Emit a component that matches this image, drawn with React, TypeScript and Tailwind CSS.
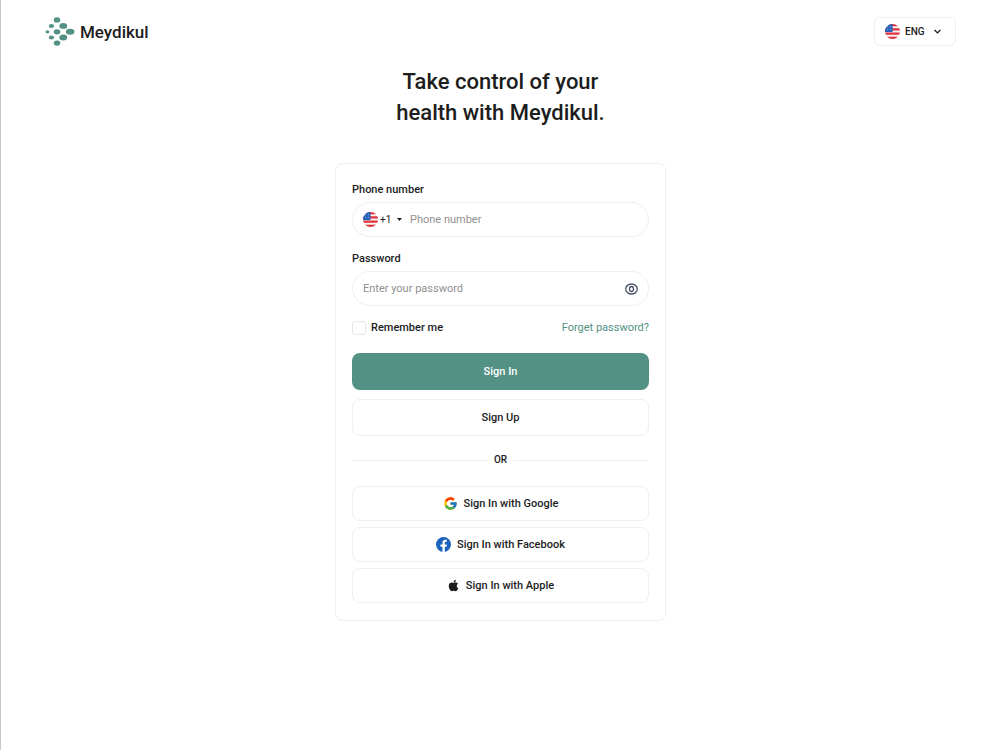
import { useState } from "react";
import type { ReactNode } from "react";
import { FcGoogle } from "react-icons/fc";
import { FaApple } from "react-icons/fa";

function Logo() {
  return (
    <svg viewBox="26 26 90 88" className="h-[29px] w-[30px]" fill="#539184" aria-hidden="true">
      <ellipse cx="62" cy="35" rx="10" ry="8" />
      <ellipse cx="45" cy="53" rx="8" ry="6" />
      <ellipse cx="81" cy="53" rx="12" ry="9" />
      <ellipse cx="33" cy="71" rx="6" ry="5" />
      <ellipse cx="62" cy="71" rx="10" ry="8" />
      <ellipse cx="102" cy="71" rx="13" ry="9" />
      <ellipse cx="45" cy="88" rx="8" ry="6" />
      <ellipse cx="81" cy="88" rx="12" ry="9" />
      <ellipse cx="62" cy="105" rx="10" ry="8" />
    </svg>
  );
}

function Flag({ id }: { id: string }) {
  return (
    <svg viewBox="0 0 28 28" className="size-[15px] shrink-0" aria-hidden="true">
      <clipPath id={id}>
        <circle cx="14" cy="14" r="14" />
      </clipPath>
      <g clipPath={`url(#${id})`}>
        <rect width="28" height="28" fill="#f6f1f3" />
        <path d="M0 2h28M0 10h28M0 18h28M0 26h28" stroke="#e0333f" strokeWidth="4" />
        <rect width="14" height="15" fill="#2560b8" />
        <path d="M4 5h2M9 5h2M4 10h2M9 10h2" stroke="#b9d0f0" strokeWidth="1.5" />
      </g>
    </svg>
  );
}

function Facebook() {
  return (
    <svg viewBox="0 0 28 28" className="size-[15px]" aria-hidden="true">
      <circle cx="14" cy="14" r="14" fill="#1b63bd" />
      <path
        d="M12 28v-10H8.400v-4.200H12v-3.100c0-3.600 2.100-5.600 5.400-5.600 1.500 0 3 .3 3 .3v3.500h-1.700c-1.700 0-2.300 1-2.300 2.100v2.800h3.900l-.6 4.200h-3.300v10z"
        fill="#fff"
      />
    </svg>
  );
}

function Eye() {
  return (
    <svg viewBox="0 0 26 24" className="h-[12px] w-[13px]" fill="none" stroke="#4a5068" strokeWidth="2.600" aria-hidden="true">
      <path d="M1.500 12C1.500 6 7 2 13 2s11.500 4 11.500 10S19 22 13 22 1.500 18 1.500 12z" />
      <ellipse cx="13" cy="12" rx="4" ry="5" />
    </svg>
  );
}

function SocialButton({ icon, children }: { icon: ReactNode; children: ReactNode }) {
  return (
    <button
      type="button"
      className="flex h-[35px] w-full items-center justify-center gap-1.5 rounded-lg border border-[#efefef] font-medium"
    >
      {icon}
      {children}
    </button>
  );
}

export default function App() {
  const [visible, setVisible] = useState(false);
  return (
    <div className="min-h-screen border-l border-[#c8c8c8] bg-white font-['Roboto',sans-serif] text-[11px] leading-4 text-[#1d1d1d]">
      <header className="flex items-center justify-between px-11 pt-[17px]">
        <a href="#" className="flex items-center gap-[5px] text-[17px] leading-6 font-medium">
          <Logo />
          Meydikul
        </a>
        <label className="relative flex h-[29px] w-[82px] items-center rounded-md border border-[#efefef] pl-[10px]">
          <Flag id="flag-language" />
          <select
            aria-label="Language"
            defaultValue="ENG"
            className="h-full flex-1 appearance-none bg-transparent pl-[5px] text-[10px] font-medium outline-none"
          >
            <option>ENG</option>
          </select>
          <svg viewBox="0 0 12 8" className="pointer-events-none absolute right-[14px] h-[5px] w-[7px]" fill="none" stroke="#1d1d1d" strokeWidth="2.200" aria-hidden="true">
            <path d="M1 1.500l5 5 5-5" />
          </svg>
        </label>
      </header>

      <main className="flex flex-col items-center pt-5">
        <h1 className="text-center text-[22px] leading-[31px] font-medium">
          Take control of your
          <br />
          health with Meydikul.
        </h1>

        <form
          onSubmit={(event) => event.preventDefault()}
          className="mt-[35px] w-full max-w-[331px] rounded-lg border border-[#efefef] px-4 pt-[18px] pb-[17px]"
        >
          <label htmlFor="phone" className="block font-medium">
            Phone number
          </label>
          <div className="mt-1 flex h-[35px] items-center rounded-full border border-[#efefef] px-[10px]">
            <Flag id="flag-phone" />
            <div className="relative flex h-full w-[30px] items-center">
              <select
                aria-label="Country code"
                defaultValue="+1"
                className="h-full w-full appearance-none bg-transparent pl-[2px] text-[10px] outline-none"
              >
                <option>+1</option>
              </select>
              <svg viewBox="0 0 10 6" className="pointer-events-none absolute right-[6px] h-[3px] w-[5px]" fill="#1d1d1d" aria-hidden="true">
                <path d="M0 0h10L5 6z" />
              </svg>
            </div>
            <input
              id="phone"
              type="tel"
              placeholder="Phone number"
              className="h-full min-w-0 flex-1 pl-[2px] outline-none placeholder:text-[#909090]"
            />
          </div>

          <label htmlFor="password" className="mt-3.5 block font-medium">
            Password
          </label>
          <div className="mt-1 flex h-[35px] items-center rounded-full border border-[#efefef] px-[10px]">
            <input
              id="password"
              type={visible ? "text" : "password"}
              placeholder="Enter your password"
              className="h-full min-w-0 flex-1 outline-none placeholder:text-[#909090]"
            />
            <button type="button" aria-label="Show password" onClick={() => setVisible(!visible)}>
              <Eye />
            </button>
          </div>

          <div className="mt-3.5 flex items-center justify-between">
            <label className="flex items-center gap-[5px] font-medium">
              <input
                type="checkbox"
                className="size-[14px] appearance-none rounded-[3px] border border-[#e8e8e8] checked:bg-[#539184]"
              />
              Remember me
            </label>
            <a href="#" className="text-[#539184]">
              Forget password?
            </a>
          </div>

          <button type="submit" className="mt-[17px] h-[37px] w-full rounded-lg bg-[#539184] font-medium text-white">
            Sign In
          </button>
          <button type="button" className="mt-[9px] h-[37px] w-full rounded-lg border border-[#efefef] font-medium">
            Sign Up
          </button>

          <div className="mt-4 flex items-center gap-[6px] text-[10px] font-medium">
            <span className="h-px flex-1 bg-[#efefef]" />
            OR
            <span className="h-px flex-1 bg-[#efefef]" />
          </div>

          <div className="mt-[18px] flex flex-col gap-[6px]">
            <SocialButton icon={<FcGoogle className="size-[15px]" />}>Sign In with Google</SocialButton>
            <SocialButton icon={<Facebook />}>Sign In with Facebook</SocialButton>
            <SocialButton icon={<FaApple className="size-[13px]" />}>Sign In with Apple</SocialButton>
          </div>
        </form>
      </main>
    </div>
  );
}
